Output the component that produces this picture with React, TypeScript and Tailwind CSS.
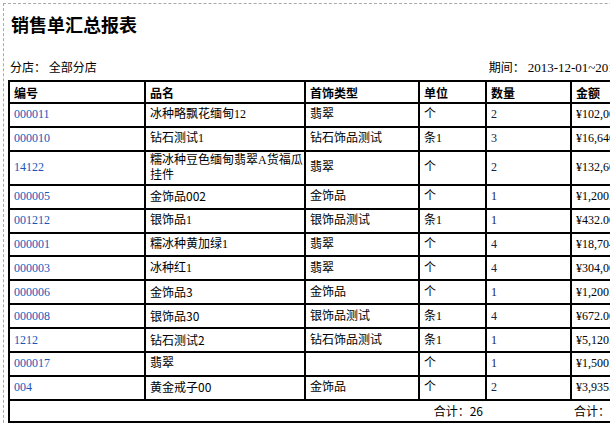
type Row = {
  code: string;
  name: React.ReactNode;
  kind: string;
  unit: string;
  qty: number;
  amount: string;
  tall?: boolean;
};

// digits in some names render in the sans CJK face, like the original page
const sans = (s: string) => <span className="font-['Noto_Sans_CJK_SC']">{s}</span>;

const rows: Row[] = [
  { code: "000011", name: "冰种略飘花缅甸12", kind: "翡翠", unit: "个", qty: 2, amount: "¥102,000.00" },
  { code: "000010", name: "钻石测试1", kind: "钻石饰品测试", unit: "条1", qty: 3, amount: "¥16,640.00" },
  {
    code: "14122",
    name: (
      <>
        糯冰种豆色缅甸翡翠A货福瓜
        <br />
        挂件
      </>
    ),
    kind: "翡翠",
    unit: "个",
    qty: 2,
    amount: "¥132,600.00",
    tall: true,
  },
  { code: "000005", name: <>金饰品{sans("002")}</>, kind: "金饰品", unit: "个", qty: 1, amount: "¥1,200.00" },
  { code: "001212", name: "银饰品1", kind: "银饰品测试", unit: "条1", qty: 1, amount: "¥432.00" },
  { code: "000001", name: "糯冰种黄加绿1", kind: "翡翠", unit: "个", qty: 4, amount: "¥18,704.00" },
  { code: "000003", name: "冰种红1", kind: "翡翠", unit: "个", qty: 4, amount: "¥304,000.00" },
  { code: "000006", name: <>金饰品{sans("3")}</>, kind: "金饰品", unit: "个", qty: 1, amount: "¥1,200.00" },
  { code: "000008", name: <>银饰品{sans("30")}</>, kind: "银饰品测试", unit: "条1", qty: 4, amount: "¥672.00" },
  { code: "1212", name: <>钻石测试{sans("2")}</>, kind: "钻石饰品测试", unit: "条1", qty: 1, amount: "¥5,120.00" },
  { code: "000017", name: "翡翠", kind: "", unit: "个", qty: 1, amount: "¥1,500.00" },
  { code: "004", name: <>黄金戒子{sans("00")}</>, kind: "金饰品", unit: "个", qty: 2, amount: "¥3,935.00" },
];

const headers = ["编号", "品名", "首饰类型", "单位", "数量", "金额"];

const cell = "border border-black px-[4px] text-left align-middle whitespace-nowrap";

export default function App() {
  const total = rows.reduce((s, r) => s + r.qty, 0);

  return (
    <div className="w-[610px] h-[425px] overflow-hidden bg-white">
      <div
        className="mt-[3px] ml-[3px] w-[760px] min-h-[440px] border border-dashed border-[#a9a9a9] px-[4px] text-black text-[12px] leading-[15px]"
        style={{ fontFamily: '"Liberation Serif", "Noto Sans CJK SC", serif' }}
      >
        <h1 className="mt-[8px] pl-[3px] text-[18px] leading-[24px] font-bold font-['Noto_Sans_CJK_SC']">
          销售单汇总报表
        </h1>

        <div className="mt-[23px] w-[648px] flex justify-between">
          <div className="pl-[2px] font-['Noto_Sans_CJK_SC']">分店： 全部分店</div>
          <div className="whitespace-nowrap">
            <span className="font-['Noto_Sans_CJK_SC']">期间：</span>{" "}
            <span className="text-[13px]">2013-12-01~2013-12-31</span>
          </div>
        </div>

        <table className="mt-[4px] w-[648px] table-fixed border-separate border-spacing-0 border border-black">
          <colgroup>
            <col className="w-[136px]" />
            <col className="w-[160px]" />
            <col className="w-[114px]" />
            <col className="w-[67px]" />
            <col className="w-[85px]" />
            <col className="w-[86px]" />
          </colgroup>
          <thead>
            <tr>
              {headers.map((h) => (
                <th key={h} className={`${cell} h-[22px] py-0 font-bold font-['Noto_Sans_CJK_SC']`}>
                  {h}
                </th>
              ))}
            </tr>
          </thead>
          <tbody>
            {rows.map((r) => {
              const h = r.tall ? "h-[34px] py-[1px]" : "h-[23.9px] py-0";
              return (
                <tr key={r.code}>
                  <td className={`${cell} ${h} text-[#1a55b8]`}>{r.code}</td>
                  <td className={`${cell} ${h}`}>{r.name}</td>
                  <td className={`${cell} ${h}`}>{r.kind}</td>
                  <td className={`${cell} ${h}`}>{r.unit}</td>
                  <td className={`${cell} ${h} text-[#16224a]`}>{r.qty}</td>
                  <td className={`${cell} ${h} overflow-hidden`}>{r.amount}</td>
                </tr>
              );
            })}
            <tr>
              <td colSpan={4} className={`${cell} h-[22px] border-r-0 text-right pr-[3px] font-['Noto_Sans_CJK_SC']`}>
                合计：{total}
              </td>
              <td className={`${cell} h-[22px] border-x-0`}></td>
              <td className={`${cell} h-[22px] border-l-0 pl-[3px] font-['Noto_Sans_CJK_SC']`}>合计：¥488,003.00</td>
            </tr>
          </tbody>
        </table>
      </div>
    </div>
  );
}
